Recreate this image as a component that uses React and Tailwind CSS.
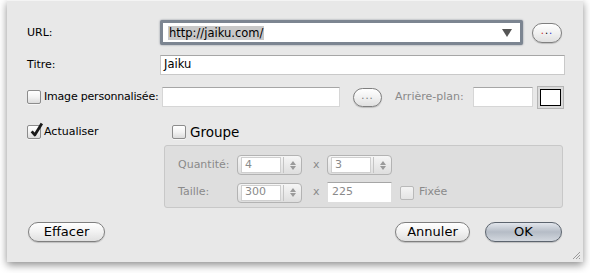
function Checkbox({ checked = false, disabled = false }) {
  return (
    <span
      className={`relative inline-flex h-[14px] w-[14px] shrink-0 items-center justify-center rounded-[2px] border bg-gradient-to-b ${
        disabled
          ? "border-[#b9b9b9] from-[#f4f4f4] to-[#e4e4e4]"
          : "border-[#8c8c8c] from-white via-[#f3f3f3] to-[#dcdcdc] shadow-[0_1px_0_rgba(255,255,255,0.6)]"
      }`}
    >
      {checked && (
        <svg viewBox="0 0 14 14" className="absolute -top-[4px] left-[1px] h-[16px] w-[15px]">
          <path d="M2.5 8.2 L5.4 11.6 L12 1" fill="none" stroke="#1a1a1a" strokeWidth="2.6" strokeLinejoin="round" />
        </svg>
      )}
    </span>
  );
}

function PillButton({ children, width, height = "h-[20px]", primary = false, small = false }) {
  return (
    <div
      className={`flex ${width} ${height} shrink-0 items-center justify-center rounded-full border bg-gradient-to-b ${
        primary
          ? "border-[#5c646e] from-[#e2e6ec] via-[#b5bcc6] to-[#d2d7de]"
          : "border-[#7f7f7f] from-white via-[#f1f1f1] to-[#e0e0e0]"
      } shadow-[0_1px_1px_rgba(0,0,0,0.18)] ${small ? "text-[10px] leading-none" : "text-[13px]"} text-black`}
    >
      {children}
    </div>
  );
}

function TextField({ width, height, children, className = "" }) {
  return (
    <div
      className={`flex ${width} ${height} shrink-0 items-center border border-[#c9c9c9] border-t-[#a6a6a6] bg-white px-[3px] ${className}`}
    >
      {children}
    </div>
  );
}

function Stepper({ value }) {
  return (
    <div className="flex h-[20px] w-[65px] shrink-0 items-center rounded-[4px] border border-[#b3b3b3] bg-gradient-to-b from-[#f6f6f6] to-[#dedede] pl-[3px]">
      <div className="flex h-[16px] w-[40px] items-center border border-[#cfcfcf] bg-white px-[3px] text-[#8a8a8a]">
        {value}
      </div>
      <div className="ml-[2px] h-[16px] w-px bg-[#c4c4c4]" />
      <div className="flex flex-1 flex-col items-center justify-center gap-[1px] text-[#9a9a9a]">
        <svg viewBox="0 0 6 4" className="h-[4px] w-[6px]">
          <path d="M3 0 L6 4 L0 4 Z" fill="currentColor" />
        </svg>
        <svg viewBox="0 0 6 4" className="h-[4px] w-[6px]">
          <path d="M0 0 L6 0 L3 4 Z" fill="currentColor" />
        </svg>
      </div>
    </div>
  );
}

export default function App() {
  return (
    <div className="h-[273px] w-[590px] overflow-hidden bg-white font-['DejaVu_Sans',sans-serif] text-[11px] text-black">
      <div className="relative ml-[7px] flex h-[262px] w-[576px] flex-col border-t border-[#f4f4f4] bg-[#e8e8e8] pl-[20px] pt-[19px] shadow-[0_3px_8px_rgba(0,0,0,0.45)]">
        <div className="flex h-[25px] items-center">
          <span className="w-[133px] pt-[2px]">URL:</span>
          <div className="flex h-[25px] w-[363px] shrink-0 items-center rounded-[2px] border-[3px] border-[#7c8591] bg-white pl-[5px] pr-[8px] shadow-[0_0_2px_rgba(60,70,90,0.6)]">
            <span className="bg-[#c8c8c8] px-[1px] text-[11.5px] leading-[14px]">http://jaiku.com/</span>
            <svg viewBox="0 0 10 8" className="ml-auto h-[8px] w-[10px]">
              <path d="M0 0 L10 0 L5 8 Z" fill="#555" />
            </svg>
          </div>
          <div className="ml-[9px]">
            <PillButton width="w-[30px]" small>
              <span className="-mt-[3px] tracking-[1px]">
                <span className="text-[#c22]">.</span>
                <span>.</span>
                <span className="text-[#23c]">.</span>
              </span>
            </PillButton>
          </div>
        </div>

        <div className="mt-[10px] flex h-[20px] items-center">
          <span className="w-[133px]">Titre:</span>
          <TextField width="w-[405px]" height="h-[20px]" className="text-[11.5px]">
            Jaiku
          </TextField>
        </div>

        <div className="mt-[11px] flex h-[22px] items-center">
          <div className="flex w-[135px] items-center gap-[3px]">
            <Checkbox />
            <span className="whitespace-nowrap tracking-[-0.2px]">Image personnalisée:</span>
          </div>
          <TextField width="w-[178px]" height="h-[20px]" className="border-[#d6d6d6]" />
          <div className="ml-[13px]">
            <PillButton width="w-[29px]" height="h-[19px]" small>
              <span className="-mt-[3px] tracking-[1px] text-[#777]">...</span>
            </PillButton>
          </div>
          <span className="ml-[13px] w-[78px] whitespace-nowrap text-[#8a8a8a]">Arrière-plan:</span>
          <TextField width="w-[60px]" height="h-[20px]" className="border-[#d6d6d6]" />
          <div className="ml-[4px] flex h-[23px] w-[27px] items-center justify-center border border-[#b4b4b4] bg-[#dadada]">
            <div className="h-[17px] w-[21px] border-[1.5px] border-black bg-white" />
          </div>
        </div>

        <div className="mt-[17px] flex h-[14px] items-center">
          <div className="flex w-[145px] items-center gap-[3px]">
            <Checkbox checked />
            <span>Actualiser</span>
          </div>
          <Checkbox />
          <span className="ml-[4px] text-[13.5px]">Groupe</span>
        </div>

        <div className="ml-[137px] mt-[6px] flex h-[63px] w-[399px] flex-col rounded-[3px] border border-[#c8c8c8] bg-[#dedede] pl-[13px] pt-[9px] text-[#8a8a8a]">
          <div className="flex h-[20px] items-center">
            <span className="w-[59px]">Quantité:</span>
            <Stepper value="4" />
            <span className="w-[25px] pl-[11px]">x</span>
            <Stepper value="3" />
          </div>
          <div className="mt-[7px] flex h-[21px] items-center">
            <span className="w-[59px]">Taille:</span>
            <Stepper value="300" />
            <span className="w-[25px] pl-[11px]">x</span>
            <TextField width="w-[65px]" height="h-[21px]" className="border-[#dedede] px-[4px] text-[#8a8a8a]">
              225
            </TextField>
            <div className="ml-[8px] flex items-center gap-[5px]">
              <Checkbox disabled />
              <span>Fixée</span>
            </div>
          </div>
        </div>

        <div className="mt-[14px] flex h-[20px] items-center pr-[21px]">
          <div className="ml-[1px]">
            <PillButton width="w-[77px]">Effacer</PillButton>
          </div>
          <div className="ml-auto">
            <PillButton width="w-[75px]">Annuler</PillButton>
          </div>
          <div className="ml-[15px]">
            <PillButton width="w-[77px]" primary>
              OK
            </PillButton>
          </div>
        </div>

        <svg viewBox="0 0 10 10" className="absolute bottom-[2px] right-[2px] h-[10px] w-[10px]">
          <path d="M9 2 L2 9 M9 5 L5 9 M9 8 L8 9" stroke="#9a9a9a" strokeWidth="1" />
        </svg>
      </div>
    </div>
  );
}
